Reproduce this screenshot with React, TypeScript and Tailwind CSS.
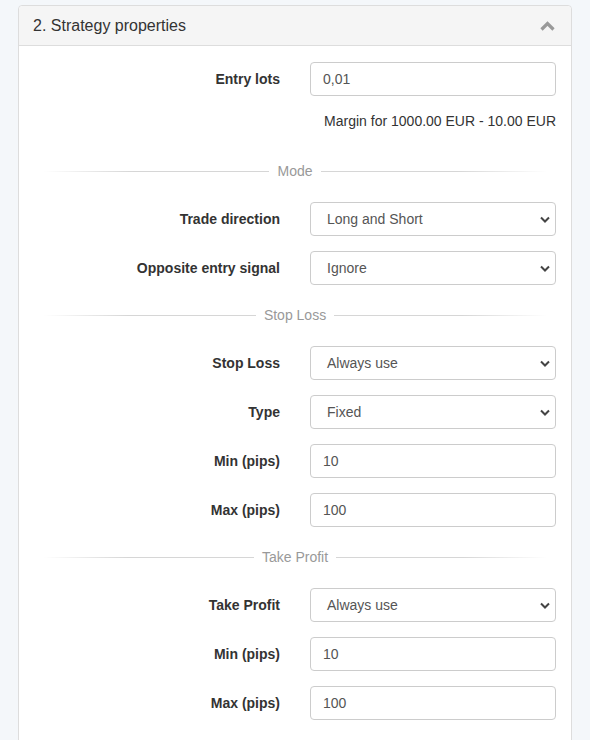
import type { ReactNode } from 'react'

const font = { fontFamily: '"Liberation Sans", Arial, Helvetica, sans-serif' }

type Field =
  | { kind: 'input'; label: string; value: string }
  | { kind: 'select'; label: string; value: string }

function Chevron() {
  return (
    <svg className="w-[10px] h-[7px]" viewBox="0 0 10 7" aria-hidden="true">
      <path d="M1 1.5l4 4 4-4" fill="none" stroke="#444" strokeWidth={2} />
    </svg>
  )
}

function Row({ field }: { field: Field }) {
  return (
    <div className="grid grid-cols-[1fr_246px] gap-x-[30px] items-center">
      <label className="text-right text-[14px] font-bold text-[#333]">{field.label}</label>
      {field.kind === 'input' ? (
        <div className="h-[34px] border border-[#ccc] rounded-[4px] bg-white flex items-center pl-[12px] text-[14px] text-[#555]">
          {field.value}
        </div>
      ) : (
        <div className="h-[34px] border border-[#ccc] rounded-[4px] bg-white flex items-center justify-between pl-[16px] pr-[5px] text-[14px] text-[#555]">
          <span>{field.value}</span>
          <Chevron />
        </div>
      )}
    </div>
  )
}

function Divider({ children }: { children: ReactNode }) {
  return (
    <div className="h-[20px] flex items-center gap-[8px] px-[9px] text-[14px] text-[#999]">
      <div className="flex-1 h-px bg-gradient-to-r from-transparent via-[#d6d6d6] via-40% to-[#d6d6d6]" />
      <span>{children}</span>
      <div className="flex-1 h-px bg-gradient-to-l from-transparent via-[#d6d6d6] via-40% to-[#d6d6d6]" />
    </div>
  )
}

function Group({ fields }: { fields: Field[] }) {
  return (
    <div className="flex flex-col gap-[15px]">
      {fields.map((f) => (
        <Row key={f.label + f.value} field={f} />
      ))}
    </div>
  )
}

export default function App() {
  return (
    <div className="min-h-[740px] bg-[#f4f7fa] pt-[5px]" style={font}>
      <div className="ml-[18px] w-[554px] border border-[#ddd] rounded-t-[4px] bg-white pb-[40px]">
        <div className="h-[40px] bg-[#f5f5f5] border-b border-[#ddd] rounded-t-[4px] flex items-center justify-between pl-[14px] pr-[16px]">
          <h3 className="text-[16px] text-[#333]">2. Strategy properties</h3>
          <svg className="w-[15px] h-[10px]" viewBox="0 0 15 10" aria-hidden="true">
            <path d="M1.5 8.5l6-6 6 6" fill="none" stroke="#999" strokeWidth={3.2} />
          </svg>
        </div>

        <div className="px-[15px] pt-[16px]">
          <Row field={{ kind: 'input', label: 'Entry lots', value: '0,01' }} />
          <p className="mt-[15px] h-[20px] leading-[20px] text-right text-[14px] text-[#333]">
            Margin for 1000.00 EUR - 10.00 EUR
          </p>

          <div className="mt-[30px]">
            <Divider>Mode</Divider>
          </div>
          <div className="mt-[21px]">
            <Group
              fields={[
                { kind: 'select', label: 'Trade direction', value: 'Long and Short' },
                { kind: 'select', label: 'Opposite entry signal', value: 'Ignore' },
              ]}
            />
          </div>

          <div className="mt-[20px]">
            <Divider>Stop Loss</Divider>
          </div>
          <div className="mt-[21px]">
            <Group
              fields={[
                { kind: 'select', label: 'Stop Loss', value: 'Always use' },
                { kind: 'select', label: 'Type', value: 'Fixed' },
                { kind: 'input', label: 'Min (pips)', value: '10' },
                { kind: 'input', label: 'Max (pips)', value: '100' },
              ]}
            />
          </div>

          <div className="mt-[20px]">
            <Divider>Take Profit</Divider>
          </div>
          <div className="mt-[21px]">
            <Group
              fields={[
                { kind: 'select', label: 'Take Profit', value: 'Always use' },
                { kind: 'input', label: 'Min (pips)', value: '10' },
                { kind: 'input', label: 'Max (pips)', value: '100' },
              ]}
            />
          </div>
        </div>
      </div>
    </div>
  )
}
